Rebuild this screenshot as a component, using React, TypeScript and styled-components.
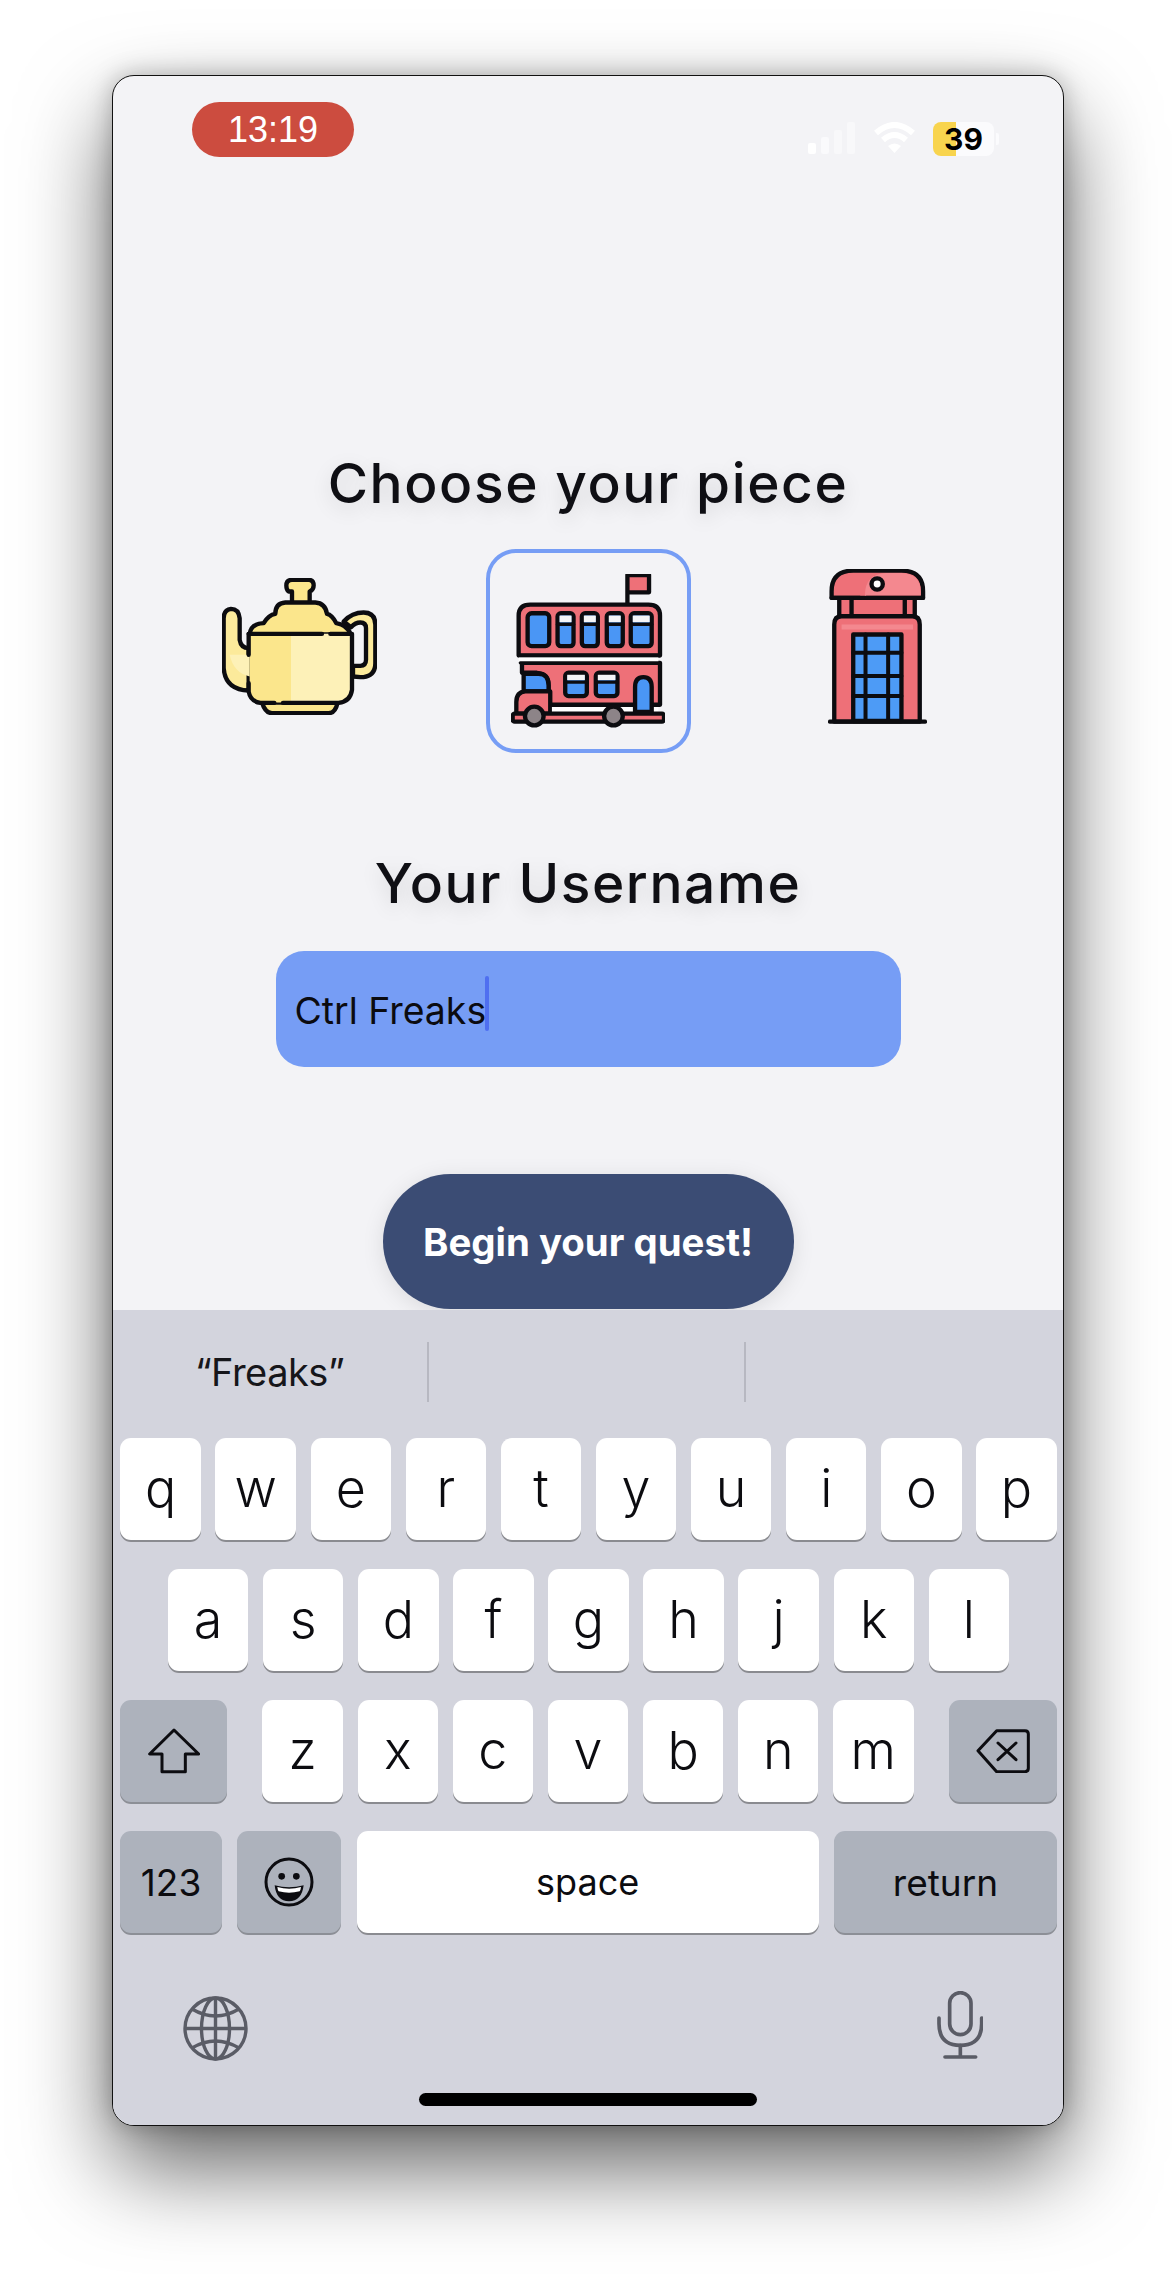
import React from "react";
import styled, { createGlobalStyle } from "styled-components";

const Global = createGlobalStyle`
  html, body { margin: 0; padding: 0; background: #fff; }
  body { font-family: Inter, "Liberation Sans", sans-serif; }
`;
const Page = styled.div`
  width: 1176px;
  height: 2274px;
  padding: 75px 112px 0;
  box-sizing: border-box;
  overflow: hidden;
`;
const Frame = styled.div`
  width: 952px;
  height: 2051px;
  box-sizing: border-box;
  border: 1px solid #111;
  border-radius: 22px;
  background: #f3f3f6;
  display: flex;
  flex-direction: column;
  box-shadow: 0 42px 90px rgba(0, 0, 0, 0.6), 0 0 24px rgba(0, 0, 0, 0.25);
  overflow: hidden;
`;
const StatusBar = styled.div`
  height: 110px;
  flex-shrink: 0;
  box-sizing: border-box;
  padding: 26px 69px 0 79px;
  display: flex;
  justify-content: space-between;
  align-items: flex-start;
`;
const TimePill = styled.div`
  width: 162px;
  height: 55px;
  border-radius: 28px;
  background: #cc4c3f;
  color: #fff;
  font: 400 36px/55px "Liberation Sans", Arial, sans-serif;
  text-align: center;
`;
const StatusIcons = styled.div`
  margin-top: 20px;
  display: flex;
  align-items: flex-start;
  gap: 17px;
`;
const Battery = styled.div`
  position: relative;
  width: 61px;
  height: 34px;
  border-radius: 8px;
  background: linear-gradient(90deg, #f8d44e 0 23px, #fbfbfd 23px);
  color: #000;
  font: 700 30px/35px Inter, sans-serif;
  text-align: center;
  &::after {
    content: "";
    position: absolute;
    top: 11px;
    right: -5px;
    width: 3px;
    height: 12px;
    border-radius: 0 2px 2px 0;
    background: #fbfbfd;
  }
`;
const Main = styled.div`
  flex: 1;
  display: flex;
  flex-direction: column;
  align-items: center;
  padding-top: 266px;
`;
const Heading = styled.h1<{ $top?: number }>`
  margin: ${(p) => p.$top ?? 0}px 0 0;
  height: 62px;
  font: 500 55px/62px Inter, sans-serif;
  letter-spacing: 1.6px;
  color: #0f0f14;
  text-shadow: 0 6px 20px rgba(0, 0, 0, 0.13);
  white-space: nowrap;
`;
const Pieces = styled.div`
  margin-top: 35px;
  display: flex;
  gap: 84px;
`;
const Piece = styled.div<{ $selected?: boolean; $lift?: number }>`
  width: 205px;
  height: 204px;
  box-sizing: border-box;
  border: 4px solid ${(p) => (p.$selected ? "#769df5" : "transparent")};
  border-radius: 30px;
  padding-bottom: ${(p) => p.$lift ?? 0}px;
  display: flex;
  align-items: center;
  justify-content: center;
`;
const Field = styled.div`
  margin-top: 37px;
  width: 625px;
  height: 116px;
  box-sizing: border-box;
  padding: 3px 0 0 19px;
  border-radius: 28px;
  background: #769df5;
  display: flex;
  align-items: center;
  font: 400 37.4px/46px Inter, sans-serif;
  color: #0b0b10;
`;
const Caret = styled.span`
  width: 4px;
  height: 55px;
  margin: -14px 0 0 -1px;
  border-radius: 2px;
  background: #4f6ff0;
`;
const QuestButton = styled.button`
  margin-top: 107px;
  width: 411px;
  height: 135px;
  border: 0;
  border-radius: 68px;
  background: #3b4c74;
  color: #fff;
  font: 700 38.4px/44px Inter, sans-serif;
  box-shadow: 0 4px 22px rgba(0, 0, 0, 0.1);
`;
const Keyboard = styled.div`
  height: 815px;
  flex-shrink: 0;
  background: #d3d4dd;
  position: relative;
`;
const Suggestions = styled.div`
  padding-top: 32px;
  height: 60px;
  display: grid;
  grid-template-columns: 315px 317px 1fr;
`;
const Suggestion = styled.div<{ $divider?: boolean }>`
  height: 60px;
  margin-left: ${(p) => (p.$divider ? "-1px" : "0")};
  border-left: ${(p) => (p.$divider ? "2px solid #b7b8c1" : "0")};
  font: 400 38px/60px Inter, sans-serif;
  letter-spacing: -0.5px;
  color: #16161a;
  text-align: center;
  padding-right: 2px;
`;
const Rows = styled.div`
  margin-top: 36px;
  padding: 0 6px 0 7px;
  display: flex;
  flex-direction: column;
  gap: 27px;
`;
const Row = styled.div<{ $spread?: boolean }>`
  display: flex;
  height: 104px;
  justify-content: ${(p) => (p.$spread ? "space-between" : "center")};
  gap: ${(p) => (p.$spread ? "0" : "14.6px")};
`;
const Group = styled.div`
  display: flex;
  gap: 14.6px;
`;
const Key = styled.div<{ $w?: number; $dark?: boolean; $size?: number }>`
  width: ${(p) => p.$w ?? 80.5}px;
  height: 102px;
  flex-shrink: 0;
  border-radius: 11px;
  background: ${(p) => (p.$dark ? "#adb2bc" : "#fff")};
  box-shadow: 0 2px 0 ${(p) => (p.$dark ? "#8c8f96" : "#8a8b90")};
  display: flex;
  align-items: center;
  justify-content: center;
  color: #0c0c10;
  font: ${(p) => (p.$size ? 400 : 300)} ${(p) => p.$size ?? 52}px/1 Inter, sans-serif;
`;
const BottomRow = styled.div`
  margin-top: 56px;
  height: 70px;
  box-sizing: border-box;
  padding: 0 80px 0 70px;
  display: flex;
  justify-content: space-between;
  align-items: flex-start;
`;
const GlobeIcon = styled.svg`
  margin-top: 5px;
`;
const HomeBar = styled.div`
  margin: 32px auto 0;
  width: 338px;
  height: 13px;
  border-radius: 7px;
  background: #000;
`;

const INK = "#0c0c10";
const RED = "#ee7078";
const BLUE = "#4a96f5";

const Signal = () => (
  <svg width="48" height="32" viewBox="0 0 48 32">
    <rect x="0" y="21" width="8" height="11" rx="2" fill="#fff" />
    <rect x="13" y="15" width="8" height="17" rx="2" fill="#fafafc" />
    <rect x="26" y="8" width="8" height="24" rx="2" fill="#f8f8fa" />
    <rect x="39" y="0" width="8" height="32" rx="2" fill="#f8f8fa" />
  </svg>
);
const Wifi = () => (
  <svg width="43" height="32" viewBox="0 0 43 32" fill="none" stroke="#fff" strokeWidth="6">
    <path d="M3 11 Q21.5 -5 40 11" />
    <path d="M10 18 Q21.5 8 33 18" />
    <path d="M21.5 31 L15 24 Q21.5 19 28 24 Z" fill="#fff" stroke="none" />
  </svg>
);

const Teapot = () => (
  <svg width="155" height="137" viewBox="65 115 465 410" strokeLinecap="round" strokeLinejoin="round">
    <g stroke={INK} strokeWidth="13" fill="#fcea9b">
      <path d="M430 245 Q455 218 490 218 Q525 218 525 255 V370 Q525 412 480 412 L458 410 V378 H480 Q497 378 497 360 V265 Q497 248 480 248 Q465 248 452 262 Z" />
      <path d="M145 325 Q122 325 118 300 V235 Q115 207 92 207 Q70 210 70 235 V385 Q75 450 145 452 Z" />
      <path d="M185 488 Q195 520 215 520 H385 Q405 520 412 488 Z" fill="#fbe68c" />
      <path d="M275 190 V155 H265 Q258 150 258 137 Q258 120 275 120 H325 Q340 120 340 137 Q340 150 328 155 V190 Z" fill="#fbe68c" />
      <path d="M148 284 Q150 252 190 250 Q205 225 225 222 Q225 190 255 188 H345 Q375 190 380 222 Q395 225 408 250 Q440 255 452 284 Z" fill="#fbe68c" />
    </g>
    <path d="M88 345 Q100 400 148 410 V345 Z" fill="#fdf1b8" />
    <path d="M148 282 H272 V488 H180 Q148 485 148 450 Z" fill="#fbe68c" />
    <path d="M272 282 H452 V450 Q450 488 415 488 H272 Z" fill="#fdf1b8" />
    <g stroke={INK} strokeWidth="13" fill="none">
      <path d="M145 282 H365 M390 282 H450" />
      <path d="M145 282 V345 M145 430 V455 Q150 485 180 489 H222 M248 489 H415 Q450 485 455 450 V282" />
    </g>
  </svg>
);

const Bus = () => (
  <svg width="154" height="154" viewBox="92 105 463 463" strokeLinecap="round" strokeLinejoin="round">
    <g stroke={INK} strokeWidth="13" fill={RED}>
      <path d="M442 195 V108 H507 V160 H442" />
      <path d="M115 350 V230 Q115 197 150 197 H505 Q540 197 540 230 V350 Z" />
      <path d="M125 372 V402 H170 Q205 405 205 440 V498 H540 V372 Z" />
      <path d="M130 405 H175 Q205 405 205 440 V458 H130 Z" fill={BLUE} />
      <path d="M108 525 V490 Q108 460 135 458 H210 V525 Z" />
      <path d="M215 505 H535 V522 H215 Z" fill="#fff" strokeWidth="0" />
      <rect x="97" y="525" width="455" height="24" rx="6" />
      <path d="M465 520 V445 Q465 415 490 415 Q515 415 515 445 V520 Z" fill={BLUE} />
    </g>
    <rect x="115" y="355" width="420" height="15" fill="#fff" />
    <path d="M115 350 H535 M120 372 H535" stroke={INK} strokeWidth="10" />
    <g stroke={INK} strokeWidth="13" fill="#8d8488">
      <circle cx="162" cy="532" r="28" />
      <circle cx="400" cy="532" r="28" />
    </g>
    <rect x="142" y="223" width="65" height="99" rx="12" fill={BLUE} stroke={INK} strokeWidth="13" />
    {[232, 305, 380, 452].map((x, i) => {
      const w = i === 3 ? 63 : 48;
      return (
        <g key={x}>
          <rect x={x} y="223" width={w} height="99" rx="10" fill={BLUE} stroke={INK} strokeWidth="13" />
          <rect x={x + 6} y="230" width={w - 12} height="20" fill="#f5f5f7" />
          <path d={`M${x} 256 H${x + w}`} stroke={INK} strokeWidth="10" />
        </g>
      );
    })}
    {[255, 347].map((x) => (
      <g key={x}>
        <rect x={x} y="402" width="65" height="70" rx="10" fill={BLUE} stroke={INK} strokeWidth="13" />
        <rect x={x + 6} y="408" width="53" height="16" fill="#f5f5f7" />
        <path d={`M${x} 430 H${x + 65}`} stroke={INK} strokeWidth="10" />
      </g>
    ))}
  </svg>
);

const Booth = () => (
  <svg width="99" height="155" viewBox="85 58 296 466" strokeLinecap="round" strokeLinejoin="round">
    <g stroke={INK} strokeWidth="13" fill={RED}>
      <rect x="118" y="145" width="227" height="60" />
      <path d="M95 145 V125 Q95 63 160 63 H305 Q370 63 370 125 V145 Z" />
      <path d="M103 517 V225 Q103 200 125 200 H338 Q360 200 360 225 V517 Z" />
    </g>
    <path d="M195 138 Q195 72 260 70 H305 Q362 72 363 125 V138 Z" fill="#f4888f" />
    <path d="M125 225 H340 V240 H310 V240 H125 Z" fill="#f4888f" />
    <path d="M95 145 H180 M200 145 H370" stroke={INK} strokeWidth="13" strokeLinecap="round" />
    <path d="M155 148 V198 M315 148 V198" stroke={INK} strokeWidth="13" />
    <circle cx="232" cy="103" r="17" fill="#fff" stroke={INK} strokeWidth="13" />
    <rect x="160" y="255" width="145" height="260" fill="#4d9bf6" stroke={INK} strokeWidth="13" />
    <path d="M197 255 V515 M265 255 V515 M160 310 H305 M160 380 H305 M160 440 H305" stroke={INK} strokeWidth="12" />
    <path d="M90 517 H376" stroke={INK} strokeWidth="13" strokeLinecap="round" />
  </svg>
);

const ShiftIcon = () => (
  <svg width="52" height="46" viewBox="140 148 156 136" fill="none" stroke={INK} strokeWidth="9" strokeLinejoin="round">
    <path d="M218 153 L145 225 H182 V278 H252 V225 H292 Z" />
  </svg>
);
const DeleteIcon = () => (
  <svg width="54" height="44" viewBox="588 150 162 132" fill="none" stroke={INK} strokeWidth="9" strokeLinejoin="round" strokeLinecap="round">
    <path d="M650 155 H735 Q745 155 745 165 V268 Q745 278 735 278 H650 L594 215 Z" />
    <path d="M654 192 L708 242 M708 192 L654 242" />
  </svg>
);
const EmojiIcon = () => (
  <svg width="50" height="50" viewBox="493 535 150 150">
    <circle cx="568" cy="610" r="69" fill="none" stroke={INK} strokeWidth="9" />
    <circle cx="546" cy="593" r="10" fill={INK} />
    <circle cx="590" cy="593" r="10" fill={INK} />
    <path d="M525 620 Q568 632 612 620 Q606 668 568 668 Q530 668 525 620 Z" fill={INK} />
    <path d="M533 625 Q568 636 604 625 Q603 634 600 638 Q568 646 537 638 Q534 634 533 625 Z" fill="#fff" />
  </svg>
);
const Globe = () => (
  <GlobeIcon as="svg" width="65" height="65" viewBox="0 0 65 65" fill="none" stroke="#5a5c66" strokeWidth="3.4">
    <circle cx="32.5" cy="32.5" r="30.5" />
    <ellipse cx="32.5" cy="32.5" rx="14" ry="30.5" />
    <path d="M32.5 2 V63 M2 32.5 H63" />
    <path d="M9 13 Q32.5 27 56 13 M9 52 Q32.5 38 56 52" />
  </GlobeIcon>
);
const Mic = () => (
  <svg width="46" height="68" viewBox="470 937 138 204" fill="none" stroke="#5a5c66" strokeWidth="11" strokeLinecap="round">
    <rect x="508" y="942" width="64" height="126" rx="32" />
    <path d="M476 1018 V1035 Q476 1100 540 1100 Q604 1100 604 1035 V1018" />
    <path d="M540 1100 V1135 M494 1135 H586" />
  </svg>
);

const row1 = "qwertyuiop".split("");
const row2 = "asdfghjkl".split("");
const row3 = "zxcvbnm".split("");

export default function App() {
  return (
    <Page>
      <Global />
      <Frame>
        <StatusBar>
          <TimePill>13:19</TimePill>
          <StatusIcons>
            <Signal />
            <Wifi />
            <Battery>39</Battery>
          </StatusIcons>
        </StatusBar>
        <Main>
          <Heading>Choose your piece</Heading>
          <Pieces>
            <Piece $lift={9}><Teapot /></Piece>
            <Piece $selected><Bus /></Piece>
            <Piece $lift={9}><Booth /></Piece>
          </Pieces>
          <Heading $top={99}>Your Username</Heading>
          <Field>
            Ctrl Freaks
            <Caret />
          </Field>
          <QuestButton>Begin your quest!</QuestButton>
        </Main>
        <Keyboard>
          <Suggestions>
            <Suggestion>“Freaks”</Suggestion>
            <Suggestion $divider />
            <Suggestion $divider />
          </Suggestions>
          <Rows>
            <Row>{row1.map((k) => <Key key={k}>{k}</Key>)}</Row>
            <Row>{row2.map((k) => <Key key={k}>{k}</Key>)}</Row>
            <Row $spread>
              <Key $w={107} $dark><ShiftIcon /></Key>
              <Group>{row3.map((k) => <Key key={k}>{k}</Key>)}</Group>
              <Key $w={108} $dark><DeleteIcon /></Key>
            </Row>
            <Row $spread>
              <Key $w={102} $dark $size={37}>123</Key>
              <Key $w={104} $dark><EmojiIcon /></Key>
              <Key $w={462} $size={36}>space</Key>
              <Key $w={223} $dark $size={37}>return</Key>
            </Row>
          </Rows>
          <BottomRow>
            <Globe />
            <Mic />
          </BottomRow>
          <HomeBar />
        </Keyboard>
      </Frame>
    </Page>
  );
}
